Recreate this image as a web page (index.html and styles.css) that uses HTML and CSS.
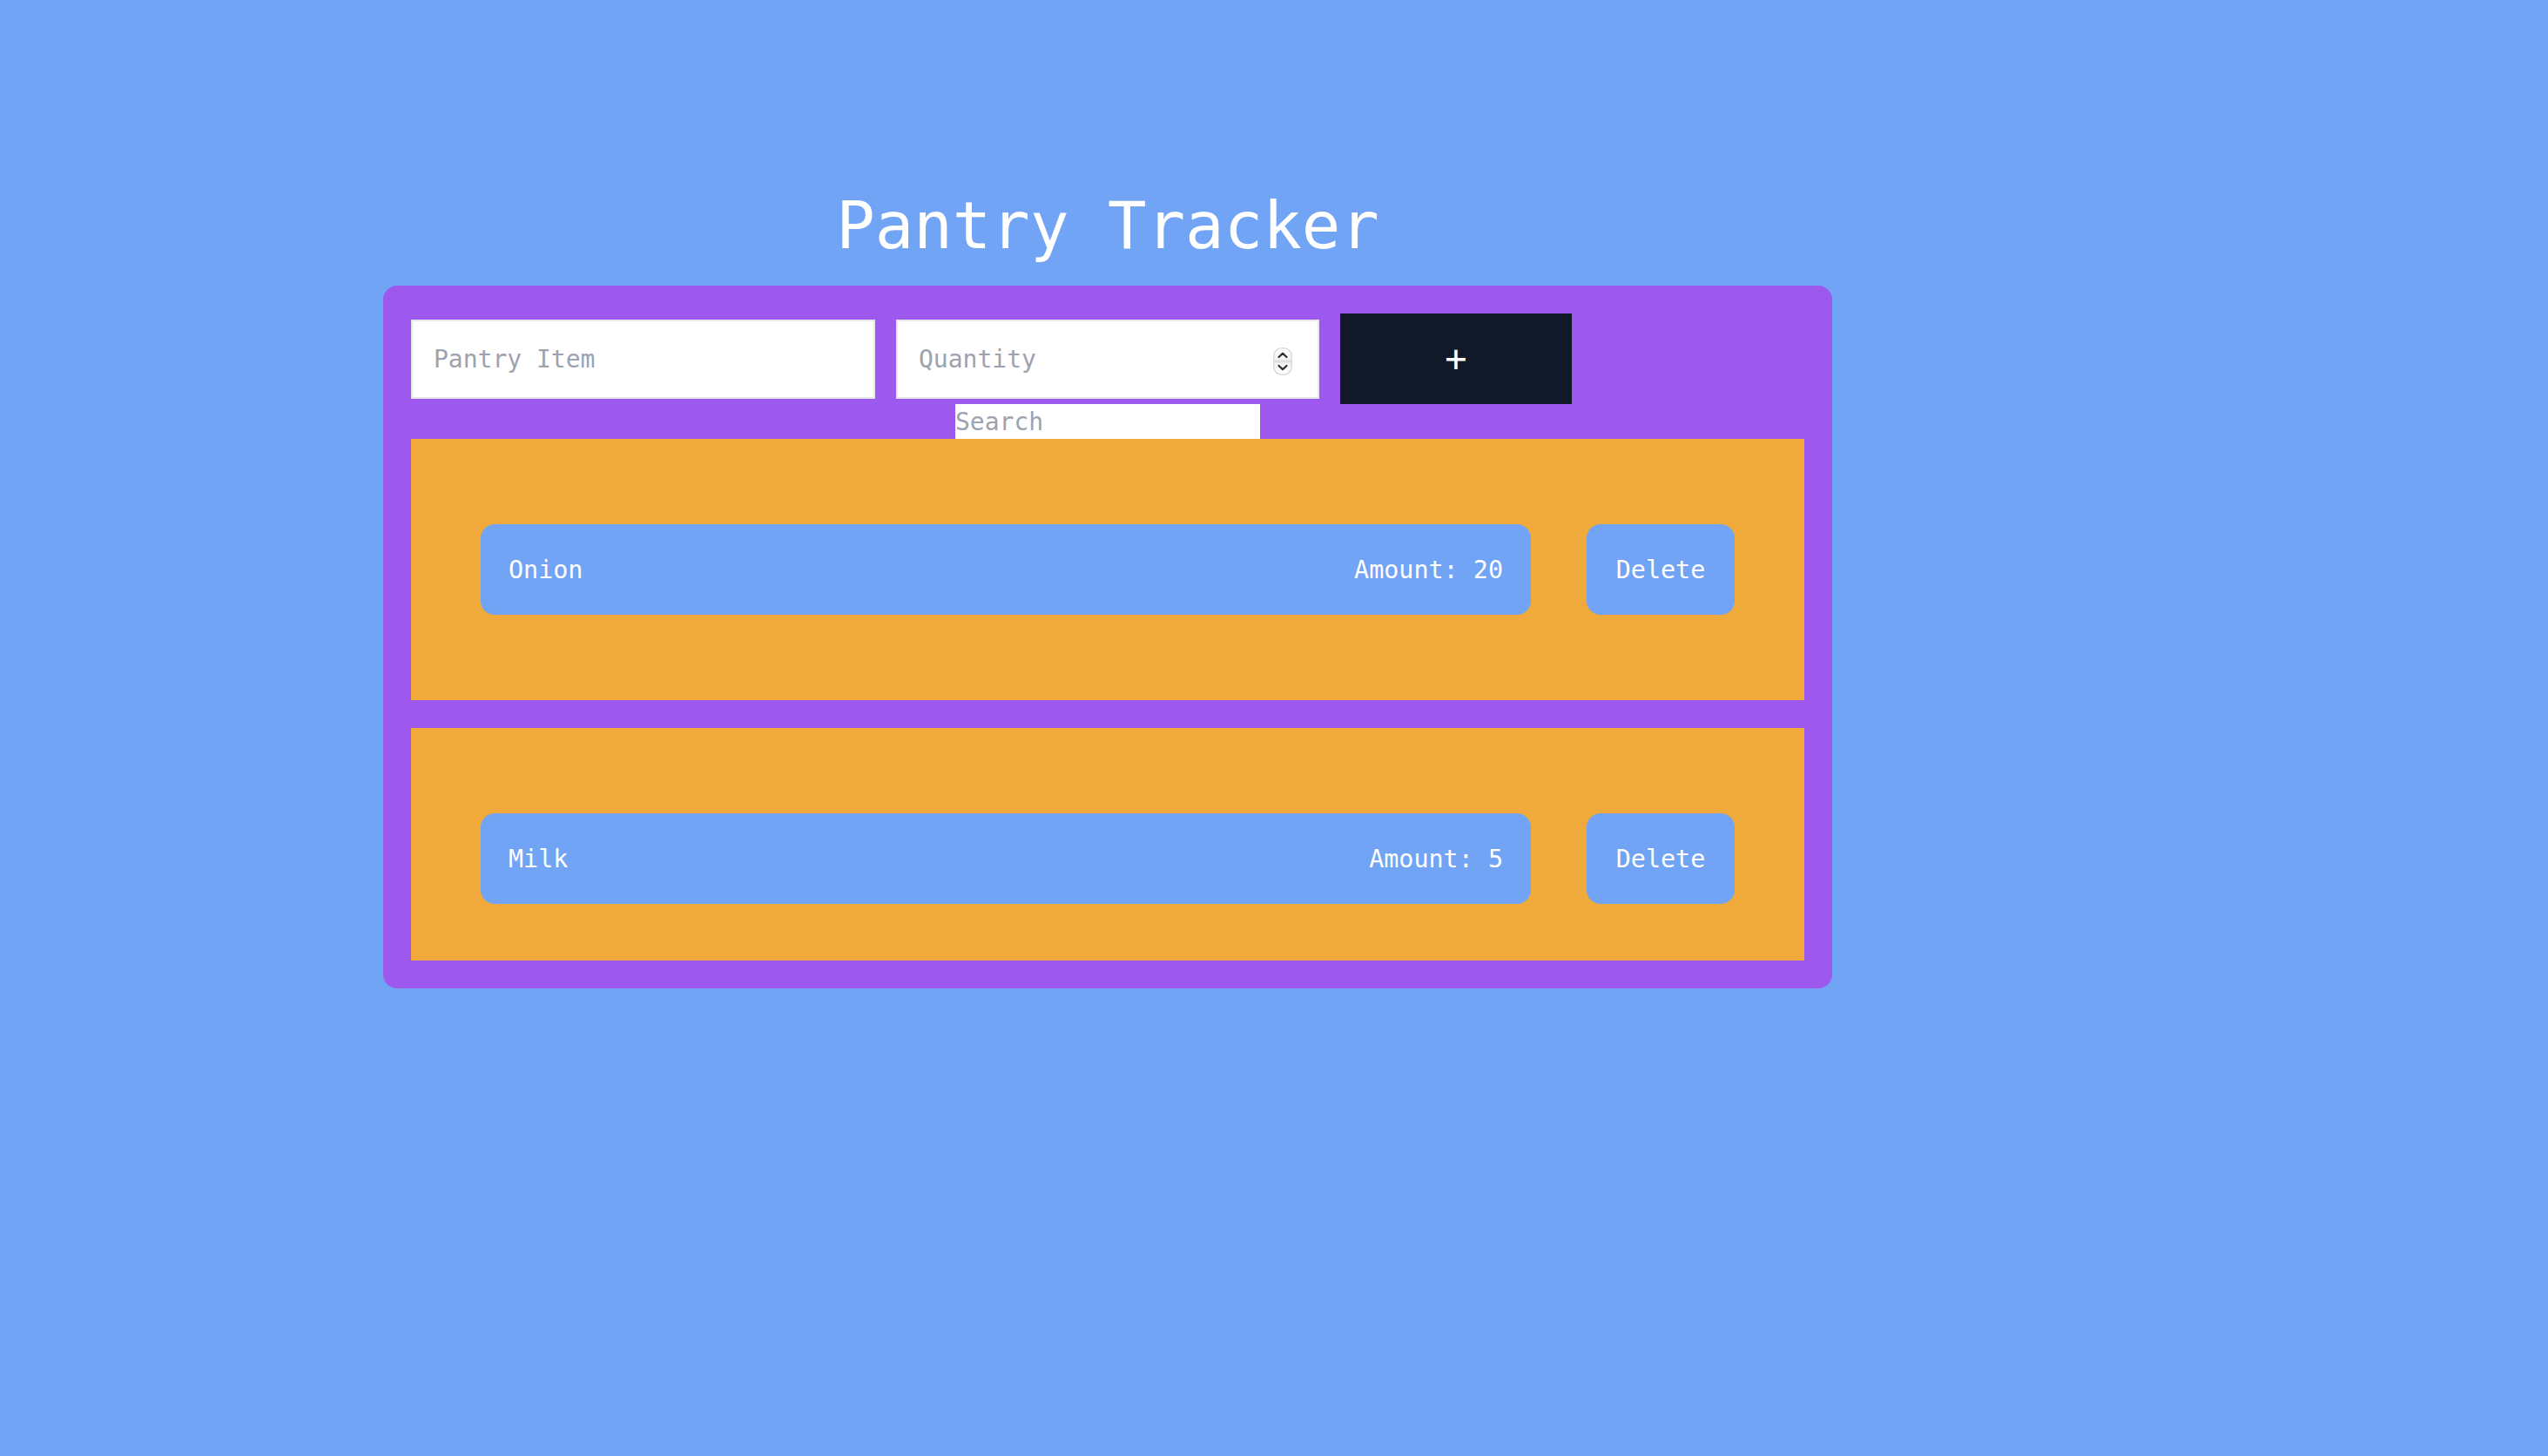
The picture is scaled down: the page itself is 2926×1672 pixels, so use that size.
FILE: index.html
```html
<!DOCTYPE html>
<html lang="en">
<head>
<meta charset="utf-8">
<title>Pantry Tracker</title>
<link rel="stylesheet" href="styles.css">
</head>
<body>
<main class="page">
  <h1 class="title">Pantry Tracker</h1>
  <section class="card">
    <form class="form-row">
      <input class="field field-item" type="text" placeholder="Pantry Item">
      <div class="qty-wrap">
        <input class="field field-qty" type="number" placeholder="Quantity">
        <svg class="spinner" width="22" height="32" viewBox="0 0 22 32" aria-hidden="true">
          <defs>
            <linearGradient id="sg" x1="0" y1="0" x2="0" y2="1">
              <stop offset="0" stop-color="#ffffff"/>
              <stop offset="0.42" stop-color="#f3f3f3"/>
              <stop offset="0.5" stop-color="#d9d9d9"/>
              <stop offset="0.58" stop-color="#f3f3f3"/>
              <stop offset="1" stop-color="#ffffff"/>
            </linearGradient>
          </defs>
          <rect x="0.75" y="0.75" width="20.5" height="30.5" rx="9" fill="url(#sg)" stroke="#dcdcdc" stroke-width="1.5"/>
          <path d="M6.5 11 L11 6.8 L15.5 11" fill="none" stroke="#2b2b2b" stroke-width="2.2" stroke-linecap="round" stroke-linejoin="round"/>
          <path d="M6.5 21 L11 25.2 L15.5 21" fill="none" stroke="#2b2b2b" stroke-width="2.2" stroke-linecap="round" stroke-linejoin="round"/>
        </svg>
      </div>
      <button class="add-btn" type="button">+</button>
    </form>
    <div class="search-row">
      <input class="search" type="text" placeholder="Search">
    </div>
    <div class="list">
      <div class="item">
        <div class="item-info">
          <span class="item-name">Onion</span>
          <span class="item-amount">Amount: 20</span>
        </div>
        <button class="delete-btn" type="button">Delete</button>
      </div>
      <div class="item">
        <div class="item-info">
          <span class="item-name">Milk</span>
          <span class="item-amount">Amount: 5</span>
        </div>
        <button class="delete-btn" type="button">Delete</button>
      </div>
    </div>
  </section>
</main>
</body>
</html>
```

FILE: styles.css
```css
* {
  box-sizing: border-box;
}

html, body {
  margin: 0;
  padding: 0;
}

body {
  background: #71a4f4;
  min-height: 100vh;
  font-family: "DejaVu Sans Mono", "Liberation Mono", monospace;
  color: #ffffff;
}

.page {
  width: 1664px;
  margin-left: 440px;
  padding-top: 222px;
}

.title {
  margin: 0;
  text-align: center;
  font-size: 74px;
  line-height: 74px;
  font-weight: normal;
  color: #ffffff;
}

.card {
  margin-top: 32px;
  width: 1664px;
  padding: 32px;
  background: #9d58ee;
  border-radius: 16px;
}

.form-row {
  display: flex;
  align-items: center;
  gap: 24px;
  height: 104px;
  margin: 0;
}

.field {
  height: 91px;
  border: 2px solid #e5e7eb;
  border-radius: 0;
  background: #ffffff;
  padding: 0 24px;
  font-family: inherit;
  font-size: 28px;
  color: #111827;
  outline: none;
}

.field::placeholder,
.search::placeholder {
  color: #9ca3af;
  opacity: 1;
}

.field-item {
  width: 533px;
}

.qty-wrap {
  position: relative;
  width: 486px;
  height: 91px;
}

.field-qty {
  width: 486px;
  -moz-appearance: textfield;
}

.field-qty::-webkit-inner-spin-button,
.field-qty::-webkit-outer-spin-button {
  -webkit-appearance: none;
  margin: 0;
}

.spinner {
  position: absolute;
  right: 31px;
  top: 32px;
  display: block;
}

.add-btn {
  width: 266px;
  height: 104px;
  border: none;
  background: #111827;
  color: #ffffff;
  font-family: inherit;
  font-size: 42px;
  line-height: 1;
  padding: 0;
  cursor: pointer;
}

.search-row {
  display: flex;
  justify-content: center;
  height: 40px;
}

.search {
  width: 350px;
  height: 40px;
  border: none;
  padding: 0;
  background: #ffffff;
  font-family: inherit;
  font-size: 28px;
  color: #111827;
  outline: none;
}

.list {
  height: 599px;
  overflow: hidden;
  display: flex;
  flex-direction: column;
  gap: 32px;
}

.item {
  flex: 0 0 300px;
  height: 300px;
  background: #f0a93b;
  padding: 0 80px;
  display: flex;
  align-items: center;
  gap: 64px;
}

.item-info {
  flex: 1;
  height: 104px;
  background: #71a4f4;
  border-radius: 16px;
  padding: 0 32px;
  display: flex;
  align-items: center;
  justify-content: space-between;
  font-size: 28.4px;
  color: #ffffff;
}

.delete-btn {
  width: 170px;
  height: 104px;
  border: none;
  border-radius: 16px;
  background: #71a4f4;
  color: #ffffff;
  font-family: inherit;
  font-size: 28.4px;
  padding: 0;
  cursor: pointer;
}
```
